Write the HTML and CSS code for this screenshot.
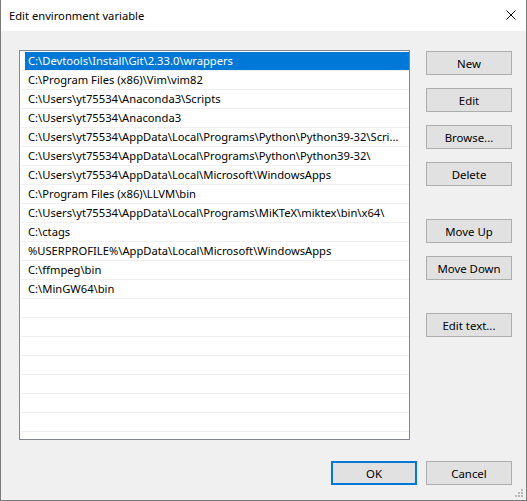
FILE: index.html
```html
<!DOCTYPE html>
<html lang="en">
<head>
    <meta charset="UTF-8">
    <title>Edit environment variable</title>
    <link rel="stylesheet" href="styles.css">
</head>
<body>
    <div class="window">
        <div class="titlebar">
            <span class="title">Edit environment variable</span>
            <svg class="close" width="10" height="10" viewBox="0 0 10 10">
                <path d="M0.5 0.5 L9.5 9.5 M9.5 0.5 L0.5 9.5" stroke="#000" stroke-width="1" fill="none"/>
            </svg>
        </div>

        <div class="content">
            <div class="main">
                <div class="listbox">
                    <div class="row selected"><span class="label">C:\Devtools\Install\Git\2.33.0\wrappers</span></div>
                    <div class="row"><span class="label">C:\Program Files (x86)\Vim\vim82</span></div>
                    <div class="row"><span class="label">C:\Users\yt75534\Anaconda3\Scripts</span></div>
                    <div class="row"><span class="label">C:\Users\yt75534\Anaconda3</span></div>
                    <div class="row"><span class="label">C:\Users\yt75534\AppData\Local\Programs\Python\Python39-32\Scri...</span></div>
                    <div class="row"><span class="label">C:\Users\yt75534\AppData\Local\Programs\Python\Python39-32\</span></div>
                    <div class="row"><span class="label">C:\Users\yt75534\AppData\Local\Microsoft\WindowsApps</span></div>
                    <div class="row"><span class="label">C:\Program Files (x86)\LLVM\bin</span></div>
                    <div class="row"><span class="label">C:\Users\yt75534\AppData\Local\Programs\MiKTeX\miktex\bin\x64\</span></div>
                    <div class="row"><span class="label">C:\ctags</span></div>
                    <div class="row"><span class="label">%USERPROFILE%\AppData\Local\Microsoft\WindowsApps</span></div>
                    <div class="row"><span class="label">C:\ffmpeg\bin</span></div>
                    <div class="row"><span class="label">C:\MinGW64\bin</span></div>
                    <div class="row"></div>
                    <div class="row"></div>
                    <div class="row"></div>
                    <div class="row"></div>
                    <div class="row"></div>
                    <div class="row"></div>
                    <div class="row"></div>
                </div>

                <div class="side">
                    <button class="btn">New</button>
                    <button class="btn">Edit</button>
                    <button class="btn">Browse...</button>
                    <button class="btn">Delete</button>
                    <button class="btn group">Move Up</button>
                    <button class="btn">Move Down</button>
                    <button class="btn group">Edit text...</button>
                </div>
            </div>

            <div class="footer">
                <button class="btn default">OK</button>
                <button class="btn">Cancel</button>
            </div>
        </div>

        <svg class="grip" width="9" height="9" viewBox="0 0 9 9">
            <rect x="6" y="0" width="2" height="2" fill="#b8b8b8"/>
            <rect x="3" y="3" width="2" height="2" fill="#b8b8b8"/>
            <rect x="6" y="3" width="2" height="2" fill="#b8b8b8"/>
            <rect x="0" y="6" width="2" height="2" fill="#b8b8b8"/>
            <rect x="3" y="6" width="2" height="2" fill="#b8b8b8"/>
            <rect x="6" y="6" width="2" height="2" fill="#b8b8b8"/>
        </svg>
    </div>
</body>
</html>
```

FILE: styles.css
```css
body {
    margin: 0;
    font-family: "Noto Sans", "Open Sans", sans-serif;
    font-size: 11.2px;
    color: #000;
    background-color: #f0f0f0;
}
.window {
    position: relative;
    width: 527px;
    height: 501px;
    box-sizing: border-box;
    border: 1px solid #7a7a7a;
    border-top: none;
    background-color: #f0f0f0;
    display: flex;
    flex-direction: column;
}
.titlebar {
    height: 31px;
    background-color: white;
    display: flex;
    align-items: center;
    justify-content: space-between;
    padding: 0 10px 0 8px;
}
.title {
    margin-top: -1px;
}
.close {
    margin-top: -1px;
}
.content {
    flex: 1;
    display: flex;
    flex-direction: column;
    padding: 19px 14px 0 18px;
}
.main {
    display: flex;
}
.listbox {
    width: 391px;
    height: 390px;
    box-sizing: border-box;
    border: 1px solid #828790;
    background-color: white;
    padding: 1px 0 0 0;
    overflow: hidden;
}
.row {
    height: 18px;
    margin-left: 1px;
    padding-left: 4px;
    border-bottom: 1px solid #f0f0f0;
}
.label {
    display: block;
    height: 18px;
    line-height: 18px;
    padding: 0 4px 0 3px;
    white-space: nowrap;
}
.selected .label {
    background-color: #0078d7;
    color: white;
}
.side {
    display: flex;
    flex-direction: column;
    gap: 13px;
    margin-left: 16px;
    margin-top: 1px;
}
.btn {
    width: 86px;
    height: 24px;
    box-sizing: border-box;
    border: 1px solid #adadad;
    background-color: #e1e1e1;
    font-family: inherit;
    font-size: 11.4px;
    color: #000;
    padding: 0;
}
.side .group {
    margin-top: 20px;
}
.footer {
    display: flex;
    justify-content: flex-end;
    gap: 9px;
    margin-top: 21px;
}
.btn.default {
    border: 2px solid #0078d7;
}
.grip {
    position: absolute;
    right: 2px;
    bottom: 2px;
}
```
